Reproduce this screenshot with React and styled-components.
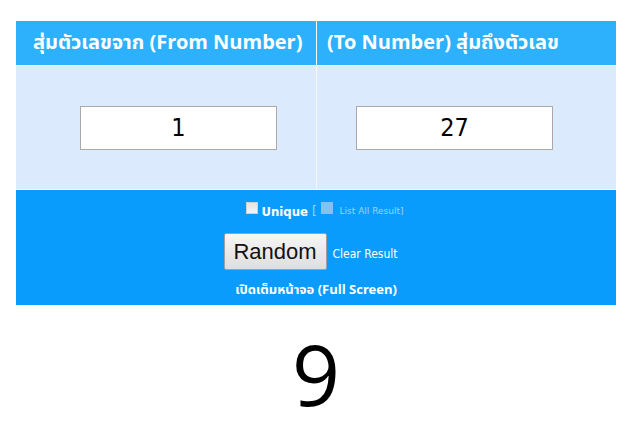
import React from "react";
import styled, { createGlobalStyle } from "styled-components";

const Global = createGlobalStyle`
  html, body { margin: 0; padding: 0; background: #fff; }
  body { font-family: "Liberation Sans", Arial, sans-serif; }
`;

const Page = styled.div`
  padding: 21px 0 0 16px;
`;

const Table = styled.div`
  width: 600px;
  display: grid;
  grid-template-columns: 300px 299px;
  grid-template-rows: 44px 123px 115px;
  gap: 1px;
  background: #f4f8fd;
`;

const HeadCell = styled.div`
  background: #2db1fd;
  color: #fff;
  font-family: "Tahoma", "Noto Sans Thai", "Liberation Sans", sans-serif;
  font-weight: bold;
  font-size: 20px;
  display: flex;
  align-items: center;
  padding-left: ${(p) => p.$pad};
  padding-bottom: 1px;
  white-space: nowrap;
`;

const InputCell = styled.div`
  background: #dbeafc;
  display: flex;
  align-items: center;
  padding-left: ${(p) => p.$pad};
`;

const NumberInput = styled.input`
  box-sizing: border-box;
  width: 197px;
  height: 44px;
  border: 1px solid #a9a9a9;
  background: #fff;
  text-align: center;
  font-family: "DejaVu Sans Condensed", "DejaVu Sans", sans-serif;
  font-size: 25px;
  color: #000;
  outline: none;
  padding: 0;
`;

const Bar = styled.div`
  grid-column: 1 / span 2;
  background: #0a9cfd;
  display: flex;
  flex-direction: column;
  align-items: center;
  padding-top: 13px;
  box-sizing: border-box;
`;

const OptionRow = styled.div`
  display: flex;
  align-items: center;
  height: 16px;
  margin-left: 18px;
`;

const Box = styled.span`
  display: inline-block;
  box-sizing: border-box;
  width: 12px;
  height: 12px;
  border: 1px solid ${(p) => (p.$dim ? "#80c3f3" : "#d0d0d0")};
  background: ${(p) =>
    p.$dim ? "#80c3f3" : "linear-gradient(#e4e4e4, #f4f4f4)"};
  margin-top: -6px;
`;

const Label = styled.span`
  color: #fff;
  font-weight: bold;
  font-size: 13px;
  font-family: "DejaVu Sans Condensed", "Liberation Sans", sans-serif;
  margin-left: 3px;
`;

const Faint = styled.span`
  color: #9dd3f7;
  font-size: ${(p) => p.$size || "9px"};
  font-family: "DejaVu Sans", sans-serif;
  margin: ${(p) => p.$m || "0"};
`;

const ButtonRow = styled.div`
  display: flex;
  align-items: center;
  margin-top: 14px;
  margin-left: -11px;
`;

const RandomButton = styled.button`
  box-sizing: border-box;
  width: 103px;
  height: 37px;
  border: 1px solid #a0a0a0;
  border-radius: 2px;
  background: linear-gradient(#f6f6f6, #dedede);
  font-family: "Liberation Sans", Arial, sans-serif;
  font-size: 22px;
  color: #111;
  padding: 0;
`;

const ClearLink = styled.span`
  color: #fff;
  font-size: 12px;
  font-family: "DejaVu Sans Condensed", "Liberation Sans", sans-serif;
  margin-left: 6px;
  margin-top: 5px;
`;

const FullScreen = styled.div`
  color: #fff;
  font-weight: bold;
  font-size: 13px;
  font-family: "Tahoma", "Noto Sans Thai", "DejaVu Sans", sans-serif;
  margin-top: 10px;
`;

const Result = styled.div`
  text-align: center;
  width: 600px;
  font-family: "Open Sans", sans-serif;
  font-size: 84px;
  line-height: 1;
  color: #000;
  margin-top: 27px;
`;

export default function App() {
  return (
    <>
      <Global />
      <Page>
        <Table>
          <HeadCell $pad="17px">สุ่มตัวเลขจาก (From Number)</HeadCell>
          <HeadCell $pad="10px">(To Number) สุ่มถึงตัวเลข</HeadCell>
          <InputCell $pad="64px">
            <NumberInput defaultValue="1" />
          </InputCell>
          <InputCell $pad="39px">
            <NumberInput defaultValue="27" />
          </InputCell>
          <Bar>
            <OptionRow>
              <Box />
              <Label>Unique</Label>
              <Faint $size="12px" $m="0 4px 0 4px">[</Faint>
              <Box $dim />
              <Faint $m="0 0 0 7px">List All Result]</Faint>
            </OptionRow>
            <ButtonRow>
              <RandomButton>Random</RandomButton>
              <ClearLink>Clear Result</ClearLink>
            </ButtonRow>
            <FullScreen>เปิดเต็มหน้าจอ (Full Screen)</FullScreen>
          </Bar>
        </Table>
        <Result>9</Result>
      </Page>
    </>
  );
}
